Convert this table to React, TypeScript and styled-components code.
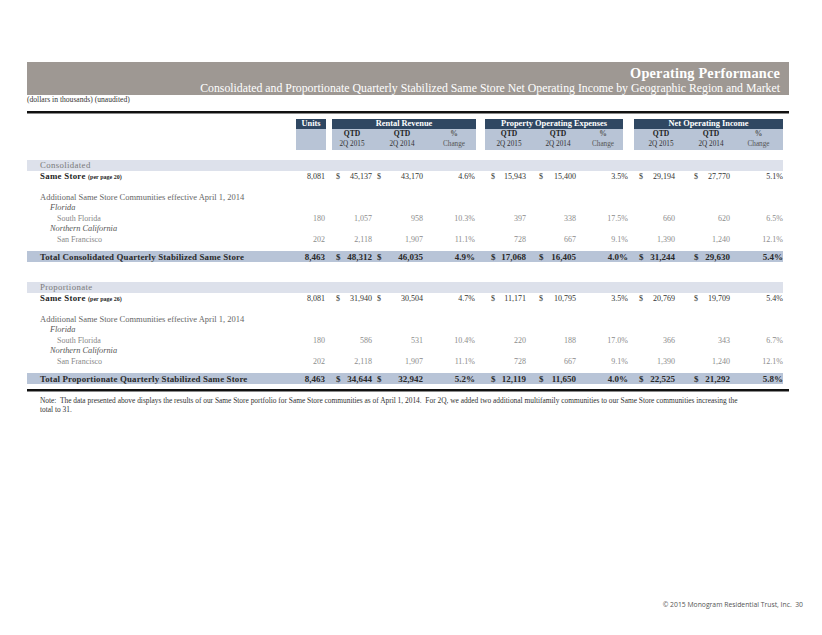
import React from "react";
import styled, { createGlobalStyle } from "styled-components";

const Global = createGlobalStyle`
  html, body { margin: 0; padding: 0; background: #fff; }
  body { font-family: "Liberation Serif", "Times New Roman", serif; color: #222; }
`;

const COLS = "269px 30px 47px 51px 52px 51px 50px 52px 47px 55px 52px";

const Page = styled.div`
  width: 822px;
  height: 635px;
  display: flex;
  flex-direction: column;
  overflow: hidden;
`;

const Content = styled.div`
  margin-left: 27px;
  width: 762px;
  padding-top: 62px;
  display: flex;
  flex-direction: column;
`;

const Banner = styled.div`
  height: 33px;
  background: #9e9893;
  display: flex;
  flex-direction: column;
  align-items: flex-end;
  justify-content: flex-start;
  padding: 3px 9px 0 0;
  box-sizing: border-box;
  color: #fff;
`;

const BannerTitle = styled.div`
  font-size: 14.3px;
  font-weight: bold;
  line-height: 16px;
  letter-spacing: 0.2px;
`;

const BannerSub = styled.div`
  font-size: 11.8px;
  line-height: 14px;
`;

const Units = styled.div`
  font-size: 7.6px;
  line-height: 9px;
  color: #333;
  height: 16px;
`;

const Rule = styled.div`
  height: 2px;
  background: #111;
  border-bottom: 1px solid #8a8a8a;
`;

const HeaderRow = styled.div`
  display: flex;
  margin: 5px 0 0 269px;
`;

const GroupBox = styled.div<{ $w: number; $ml: number }>`
  width: ${(p) => p.$w}px;
  margin-left: ${(p) => p.$ml}px;
  display: flex;
  flex-direction: column;
`;

const GroupTitle = styled.div`
  height: 9.5px;
  background: #2f4762;
  color: #fff;
  font-weight: bold;
  font-size: 8.4px;
  line-height: 9.5px;
  text-align: center;
  white-space: nowrap;
`;

const GroupBody = styled.div<{ $cols: string }>`
  height: 21px;
  background: #b8c4d6;
  display: grid;
  grid-template-columns: ${(p) => p.$cols};
  align-content: center;
`;

const SubHead = styled.div`
  display: flex;
  flex-direction: column;
  align-items: center;
  line-height: 10px;
`;

const SubTop = styled.span<{ $muted?: boolean }>`
  font-size: 7.6px;
  font-weight: bold;
  color: ${(p) => (p.$muted ? "#555" : "#222")};
`;

const SubBottom = styled.span<{ $muted?: boolean }>`
  font-size: 7.2px;
  color: ${(p) => (p.$muted ? "#555" : "#333")};
`;

const Section = styled.div<{ $mt: number }>`
  margin-top: ${(p) => p.$mt}px;
  width: 756px;
  display: flex;
  flex-direction: column;
`;

const Band = styled.div`
  height: 11px;
  background: #dde1eb;
  padding-left: 13px;
  font-size: 8.8px;
  line-height: 11px;
  color: #7a7a7a;
  letter-spacing: 0.35px;
`;

const Row = styled.div<{ $tone: "main" | "sub" | "total"; $mt?: number }>`
  display: grid;
  grid-template-columns: ${COLS};
  height: ${(p) => (p.$tone === "total" ? 11 : 10.5)}px;
  margin-top: ${(p) => p.$mt ?? 0}px;
  align-items: center;
  background: ${(p) => (p.$tone === "total" ? "#b8c4d7" : "transparent")};
  font-size: ${(p) => (p.$tone === "total" ? 9 : 8)}px;
  font-weight: ${(p) => (p.$tone === "total" ? "bold" : "normal")};
  color: ${(p) => (p.$tone === "sub" ? "#8c8c8c" : p.$tone === "total" ? "#2a2a2a" : "#333")};
  white-space: nowrap;
`;

const Label = styled.div<{ $indent?: number; $italic?: boolean; $kind?: "main" | "note" | "region" | "item" | "total" }>`
  padding-left: ${(p) => 13 + (p.$indent ?? 0)}px;
  font-style: ${(p) => (p.$italic ? "italic" : "normal")};
  font-size: ${(p) =>
    p.$kind === "main" ? 8.8 : p.$kind === "total" ? 8.9 : p.$kind === "note" ? 8.5 : p.$kind === "region" ? 8.3 : 8}px;
  font-weight: ${(p) => (p.$kind === "main" || p.$kind === "total" ? "bold" : "normal")};
  color: ${(p) =>
    p.$kind === "main" ? "#1e1e1e" : p.$kind === "note" ? "#666" : p.$kind === "region" ? "#555" : p.$kind === "item" ? "#888" : "#2a2a2a"};
  letter-spacing: ${(p) => (p.$kind === "main" ? 0.3 : p.$kind === "total" ? 0.15 : 0)}px;
`;

const Small = styled.span`
  font-size: 6px;
  letter-spacing: 0;
`;

const Num = styled.div<{ $pr?: number }>`
  text-align: right;
  padding-right: ${(p) => p.$pr ?? 1}px;
`;

const Money = styled.div<{ $pl: number }>`
  display: flex;
  justify-content: space-between;
  padding-left: ${(p) => p.$pl}px;
  padding-right: 1px;
`;

const BottomRule = styled(Rule)`
  margin-top: 5px;
`;

const Note = styled.div`
  margin-top: 3.5px;
  padding-left: 13px;
  font-size: 7.4px;
  line-height: 9.5px;
  color: #333;
`;

const Footer = styled.div`
  margin-top: auto;
  align-self: flex-end;
  margin-right: 19px;
  padding-bottom: 25px;
  font-family: "Open Sans", "Liberation Sans", sans-serif;
  font-size: 6.8px;
  line-height: 10px;
  color: #555;
  white-space: pre;
`;

type Vals = {
  units: string;
  r15: string;
  r14: string;
  rp: string;
  p15: string;
  p14: string;
  pp: string;
  n15: string;
  n14: string;
  np: string;
};

const DOLLAR = [10, 4, 15, 12, 10, 18];

const Cells: React.FC<{ v: Vals; dollars: boolean }> = ({ v, dollars }) => {
  const money = (val: string, i: number) =>
    dollars ? (
      <Money $pl={DOLLAR[i]}>
        <span>$</span>
        <span>{val}</span>
      </Money>
    ) : (
      <Num>{val}</Num>
    );
  return (
    <>
      <Num>{v.units}</Num>
      {money(v.r15, 0)}
      {money(v.r14, 1)}
      <Num>{v.rp}</Num>
      {money(v.p15, 2)}
      {money(v.p14, 3)}
      <Num>{v.pp}</Num>
      {money(v.n15, 4)}
      {money(v.n14, 5)}
      <Num $pr={0}>{v.np}</Num>
    </>
  );
};

type Block = {
  title: string;
  page: string;
  same: Vals;
  fl: Vals;
  sf: Vals;
  totalLabel: string;
  total: Vals;
};

const blocks: Block[] = [
  {
    title: "Consolidated",
    page: "(per page 20)",
    same: { units: "8,081", r15: "45,137", r14: "43,170", rp: "4.6%", p15: "15,943", p14: "15,400", pp: "3.5%", n15: "29,194", n14: "27,770", np: "5.1%" },
    fl: { units: "180", r15: "1,057", r14: "958", rp: "10.3%", p15: "397", p14: "338", pp: "17.5%", n15: "660", n14: "620", np: "6.5%" },
    sf: { units: "202", r15: "2,118", r14: "1,907", rp: "11.1%", p15: "728", p14: "667", pp: "9.1%", n15: "1,390", n14: "1,240", np: "12.1%" },
    totalLabel: "Total Consolidated Quarterly Stabilized Same Store",
    total: { units: "8,463", r15: "48,312", r14: "46,035", rp: "4.9%", p15: "17,068", p14: "16,405", pp: "4.0%", n15: "31,244", n14: "29,630", np: "5.4%" },
  },
  {
    title: "Proportionate",
    page: "(per page 26)",
    same: { units: "8,081", r15: "31,940", r14: "30,504", rp: "4.7%", p15: "11,171", p14: "10,795", pp: "3.5%", n15: "20,769", n14: "19,709", np: "5.4%" },
    fl: { units: "180", r15: "586", r14: "531", rp: "10.4%", p15: "220", p14: "188", pp: "17.0%", n15: "366", n14: "343", np: "6.7%" },
    sf: { units: "202", r15: "2,118", r14: "1,907", rp: "11.1%", p15: "728", p14: "667", pp: "9.1%", n15: "1,390", n14: "1,240", np: "12.1%" },
    totalLabel: "Total Proportionate Quarterly Stabilized Same Store",
    total: { units: "8,463", r15: "34,644", r14: "32,942", rp: "5.2%", p15: "12,119", p14: "11,650", pp: "4.0%", n15: "22,525", n14: "21,292", np: "5.8%" },
  },
];

const groups = [
  { title: "Rental Revenue", w: 144, ml: 6, cols: "40px 60px 44px" },
  { title: "Property Operating Expenses", w: 138, ml: 9, cols: "48px 50px 40px" },
  { title: "Net Operating Income", w: 149, ml: 11, cols: "54px 46px 49px" },
];

const SectionBlock: React.FC<{ b: Block; mt: number }> = ({ b, mt }) => (
  <Section $mt={mt}>
    <Band>{b.title}</Band>
    <Row $tone="main">
      <Label $kind="main">
        Same Store <Small>{b.page}</Small>
      </Label>
      <Cells v={b.same} dollars />
    </Row>
    <Row $tone="main" />
    <Row $tone="sub">
      <Label $kind="note">Additional Same Store Communities effective April 1, 2014</Label>
    </Row>
    <Row $tone="sub">
      <Label $kind="region" $italic $indent={10}>
        Florida
      </Label>
    </Row>
    <Row $tone="sub">
      <Label $kind="item" $indent={17}>
        South Florida
      </Label>
      <Cells v={b.fl} dollars={false} />
    </Row>
    <Row $tone="sub">
      <Label $kind="region" $italic $indent={10}>
        Northern California
      </Label>
    </Row>
    <Row $tone="sub">
      <Label $kind="item" $indent={17}>
        San Francisco
      </Label>
      <Cells v={b.sf} dollars={false} />
    </Row>
    <Row $tone="total" $mt={6.5}>
      <Label $kind="total">{b.totalLabel}</Label>
      <Cells v={b.total} dollars />
    </Row>
  </Section>
);

export default function App() {
  return (
    <Page>
      <Global />
      <Content>
        <Banner>
          <BannerTitle>Operating Performance</BannerTitle>
          <BannerSub>
            Consolidated and Proportionate Quarterly Stabilized Same Store Net Operating Income by Geographic Region and Market
          </BannerSub>
        </Banner>
        <Units>(dollars in thousands) (unaudited)</Units>
        <Rule />
        <HeaderRow>
          <GroupBox $w={30} $ml={0}>
            <GroupTitle>Units</GroupTitle>
            <GroupBody $cols="1fr" />
          </GroupBox>
          {groups.map((g) => (
            <GroupBox key={g.title} $w={g.w} $ml={g.ml}>
              <GroupTitle>{g.title}</GroupTitle>
              <GroupBody $cols={g.cols}>
                <SubHead>
                  <SubTop>QTD</SubTop>
                  <SubBottom>2Q 2015</SubBottom>
                </SubHead>
                <SubHead>
                  <SubTop>QTD</SubTop>
                  <SubBottom>2Q 2014</SubBottom>
                </SubHead>
                <SubHead>
                  <SubTop $muted>%</SubTop>
                  <SubBottom $muted>Change</SubBottom>
                </SubHead>
              </GroupBody>
            </GroupBox>
          ))}
        </HeaderRow>
        <SectionBlock b={blocks[0]} mt={10.5} />
        <SectionBlock b={blocks[1]} mt={20} />
        <BottomRule />
        <Note>
          Note:&nbsp; The data presented above displays the results of our Same Store portfolio for Same Store communities as of April 1, 2014.&nbsp; For 2Q, we added two additional multifamily communities to our Same Store communities increasing the
          <br />
          total to 31.
        </Note>
      </Content>
      <Footer>{"© 2015 Monogram Residential Trust, Inc.  30"}</Footer>
    </Page>
  );
}
